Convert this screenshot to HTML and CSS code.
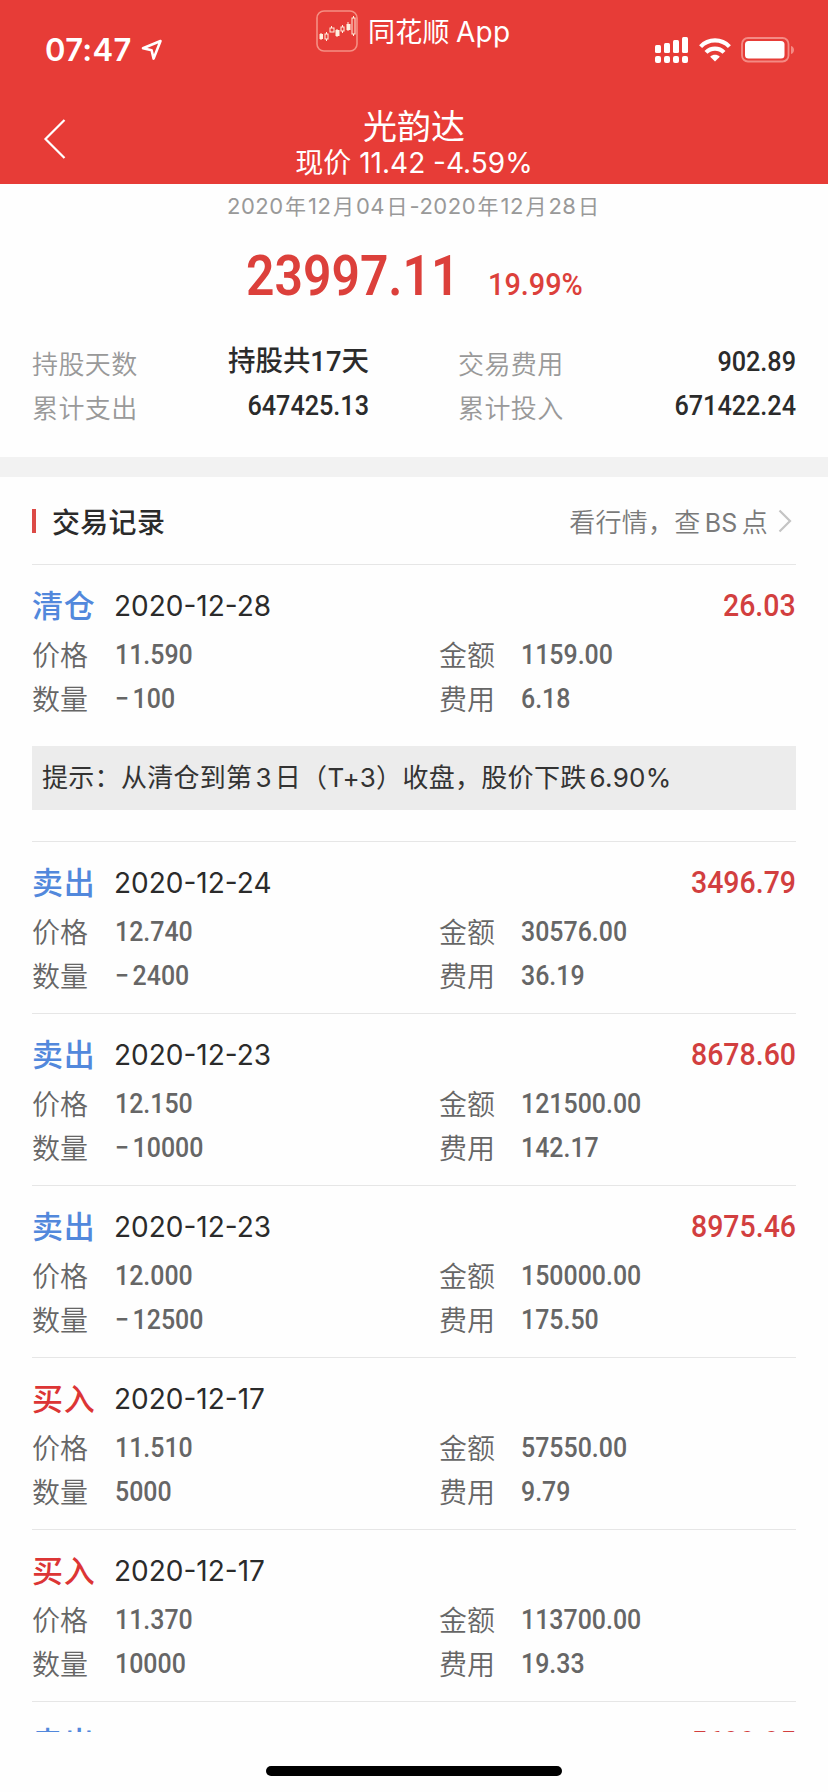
FILE: index.html
```html
<!DOCTYPE html>
<html lang="zh-CN">
<head>
    <meta charset="UTF-8">
    <meta name="viewport" content="width=device-width, initial-scale=1.0">
    <title>光韵达</title>
    <link rel="stylesheet" href="styles.css">
</head>
<body>

<div class="header">
    <div class="statusbar">
        <div class="clock">
            <span>07:47</span>
            <svg width="22" height="22" viewBox="0 0 22 22"><path d="M19.5 2 L2 9.3 L10.6 11.2 L12.6 19.6 Z" fill="none" stroke="#fff" stroke-width="2.6" stroke-linejoin="round"/></svg>
        </div>
        <div class="brand">
            <svg width="42" height="42" viewBox="0 0 42 42">
                <rect x="1" y="1" width="40" height="40" rx="7" fill="none" stroke="#f58f84" stroke-width="1.6"/>
                <g fill="none" stroke="#fff0df" stroke-width="1">
                    <path d="M5 23v7M10.5 22v2M10.5 29v2M15.500 16v2M21 19v8M26.500 15v2M26.500 21v2M32 12v9M37.500 6v2M37.500 24v2"/>
                    <rect x="9" y="24" width="3" height="5"/>
                    <rect x="14" y="18" width="4" height="4"/>
                    <rect x="25" y="17" width="3" height="4"/>
                    <rect x="36" y="8" width="3" height="16"/>
                </g>
                <path d="M3.500 24h3.500v5h-3.500zM19.500 20h4v6h-4zM30.500 14h4v6h-4z" fill="#fff0df"/>
            </svg>
            <span>同花顺<i>App</i></span>
        </div>
        <div class="signals">
            <svg width="34" height="27" viewBox="0 0 34 27" fill="#fff">
                <rect x="0" y="8" width="6" height="8" rx="1.500"/>
                <rect x="9" y="6" width="6" height="10" rx="1.500"/>
                <rect x="18" y="3" width="6" height="13" rx="1.500"/>
                <rect x="27" y="0" width="6" height="16" rx="1.500"/>
                <rect x="0" y="19" width="6" height="7" rx="2"/>
                <rect x="9" y="19" width="6" height="7" rx="2"/>
                <rect x="18" y="19" width="6" height="7" rx="2"/>
                <rect x="27" y="19" width="6" height="7" rx="2"/>
            </svg>
            <svg width="32" height="24" viewBox="0 0 32 24">
                <g fill="none" stroke="#fff" stroke-width="4.200">
                    <path d="M1.600 8.600 C9.500 0.400 22.500 0.400 30.400 8.600"/>
                    <path d="M7 14.400 C12 9.300 20 9.300 25 14.400"/>
                </g>
                <path d="M11.200 18.700 C14 16.200 18 16.200 20.800 18.700 L16 23.600 Z" fill="#fff"/>
            </svg>
            <svg width="54" height="26" viewBox="0 0 54 26">
                <rect x="1" y="1" width="46.500" height="23.500" rx="6" fill="none" stroke="#f48a84" stroke-width="1.800"/>
                <rect x="4" y="4" width="39.500" height="17.500" rx="3.500" fill="#fff"/>
                <path d="M50 9 C54 10 54 16 50 17 Z" fill="#f48a84"/>
            </svg>
        </div>
    </div>
    <div class="navbar">
        <svg class="back" width="24" height="42" viewBox="0 0 24 42"><path d="M21.500 2 L2.500 21 L21.500 40" fill="none" stroke="#fff" stroke-width="2.200"/></svg>
        <div class="stock">
            <div class="stock-name">光韵达</div>
            <div class="stock-price">现价 11.42 -4.59%</div>
        </div>
    </div>
</div>

<div class="summary">
    <div class="period">2020<b>年</b>12<b>月</b>04<b>日</b>-2020<b>年</b>12<b>月</b>28<b>日</b></div>
    <div class="profit">
        <span class="profit-value">23997.11</span>
        <span class="profit-rate">19.99%</span>
    </div>
    <div class="totals">
        <span class="label">持股天数</span><span class="value value-cn">持股共17天</span>
        <span class="label">交易费用</span><span class="value">902.89</span>
        <span class="label">累计支出</span><span class="value">647425.13</span>
        <span class="label">累计投入</span><span class="value">671422.24</span>
    </div>
</div>

<div class="records">
    <div class="records-head">
        <h2>交易记录</h2>
        <a class="more"><span>看行情，查<i>BS</i>点</span>
            <svg width="14" height="24" viewBox="0 0 14 24"><path d="M1.500 1.500 L12 12 L1.500 22.500" fill="none" stroke="#c4c4c4" stroke-width="2.200"/></svg>
        </a>
    </div>

    <div class="record">
        <div class="record-top"><span class="type sell">清仓</span><span class="date">2020-12-28</span><span class="gain">26.03</span></div>
        <div class="detail"><span>价格</span><b>11.590</b><span>金额</span><b>1159.00</b></div>
        <div class="detail"><span>数量</span><b><i>−</i>100</b><span>费用</span><b>6.18</b></div>
        <div class="tip">提示：从清仓到第<i>3</i>日（T+3）收盘，股价下跌<i>6.90%</i></div>
    </div>

    <div class="record">
        <div class="record-top"><span class="type sell">卖出</span><span class="date">2020-12-24</span><span class="gain">3496.79</span></div>
        <div class="detail"><span>价格</span><b>12.740</b><span>金额</span><b>30576.00</b></div>
        <div class="detail"><span>数量</span><b><i>−</i>2400</b><span>费用</span><b>36.19</b></div>
    </div>

    <div class="record">
        <div class="record-top"><span class="type sell">卖出</span><span class="date">2020-12-23</span><span class="gain">8678.60</span></div>
        <div class="detail"><span>价格</span><b>12.150</b><span>金额</span><b>121500.00</b></div>
        <div class="detail"><span>数量</span><b><i>−</i>10000</b><span>费用</span><b>142.17</b></div>
    </div>

    <div class="record">
        <div class="record-top"><span class="type sell">卖出</span><span class="date">2020-12-23</span><span class="gain">8975.46</span></div>
        <div class="detail"><span>价格</span><b>12.000</b><span>金额</span><b>150000.00</b></div>
        <div class="detail"><span>数量</span><b><i>−</i>12500</b><span>费用</span><b>175.50</b></div>
    </div>

    <div class="record">
        <div class="record-top"><span class="type buy">买入</span><span class="date">2020-12-17</span></div>
        <div class="detail"><span>价格</span><b>11.510</b><span>金额</span><b>57550.00</b></div>
        <div class="detail"><span>数量</span><b>5000</b><span>费用</span><b>9.79</b></div>
    </div>

    <div class="record">
        <div class="record-top"><span class="type buy">买入</span><span class="date">2020-12-17</span></div>
        <div class="detail"><span>价格</span><b>11.370</b><span>金额</span><b>113700.00</b></div>
        <div class="detail"><span>数量</span><b>10000</b><span>费用</span><b>19.33</b></div>
    </div>

    <div class="record">
        <div class="record-top"><span class="type sell">卖出</span><span class="gain">5699.95</span></div>
    </div>
</div>

<div class="home-bar"></div>

</body>
</html>
```

FILE: styles.css
```css
* {
    box-sizing: border-box;
}

body {
    margin: 0;
    width: 828px;
    height: 1792px;
    overflow: hidden;
    background-color: #fefefe;
    color: #2b2b2b;
    font-family: Inter, "Noto Sans CJK SC", sans-serif;
}

i {
    font-style: normal;
}

svg {
    display: block;
    flex: none;
}

/* header */
.header {
    height: 184px;
    background-color: #e73c37;
    color: #fff;
}

.statusbar {
    display: grid;
    grid-template-columns: 316px 1fr 173px;
    height: 98px;
}

.clock {
    display: flex;
    align-items: center;
    gap: 9px;
    padding: 1px 0 0 45px;
    font-size: 31px;
    font-weight: 600;
    letter-spacing: 0.3px;
}

.brand {
    display: flex;
    align-items: center;
    gap: 10px;
    height: 42px;
    margin-top: 10px;
    font-size: 27px;
    line-height: 38px;
    letter-spacing: 0.3px;
    white-space: nowrap;
}

.brand span {
    margin-top: 2px;
}

.brand i {
    margin-left: 6px;
    font-size: 28px;
}

.signals {
    display: flex;
    align-items: center;
    gap: 10px;
    padding: 2px 0 0 0;
}

.navbar {
    display: grid;
    grid-template-columns: 100px 1fr 100px;
    height: 86px;
}

.back {
    margin: 20px 0 0 43px;
}

.stock {
    text-align: center;
}

.stock-name {
    margin-top: 9px;
    font-size: 34px;
    line-height: 40px;
}

.stock-price {
    font-size: 28px;
    line-height: 32px;
}

/* summary */
.summary {
    height: 293px;
    border-bottom: 20px solid #f2f2f2;
}

.period {
    height: 44px;
    color: #999;
    font-size: 22px;
    line-height: 44px;
    letter-spacing: 0.5px;
    text-align: center;
}

.period b {
    margin: 0 1.5px;
    font-size: 21px;
    font-weight: 400;
}

/* numbers are squeezed to get a DIN-like look */
.profit-value,
.profit-rate,
.value,
.gain,
.detail b {
    font-family: Roboto, "Noto Sans CJK SC", sans-serif;
    font-weight: 500;
    transform: scaleX(0.9);
    transform-origin: left;
}

.profit {
    display: flex;
    align-items: baseline;
    gap: 2px;
    height: 110px;
    padding-left: 246px;
    color: #dc403b;
    line-height: 97px;
}

.profit-value {
    font-size: 56px;
    font-weight: 600;
    transform: scaleX(0.89);
}

.profit-rate {
    font-size: 31px;
    transform: scaleX(0.93);
}

.totals {
    display: grid;
    grid-template-columns: 125px 212px 215px 212px;
    padding: 2px 0 0 32px;
    line-height: 44px;
}

.label {
    height: 44px;
    padding-top: 3px;
    color: #999;
    font-size: 26px;
    font-weight: 350;
    letter-spacing: 0.4px;
    white-space: nowrap;
}

.totals .label:nth-child(4n + 3) {
    padding-left: 89px;
}

.value {
    height: 44px;
    font-size: 28px;
    text-align: right;
    transform-origin: right;
}

.value-cn {
    transform: scaleX(0.98);
}

/* records */
.records {
    height: 1255px;
    overflow: hidden;
    padding: 0 32px;
}

.records-head {
    display: flex;
    align-items: center;
    justify-content: space-between;
    height: 87px;
}

.records-head h2 {
    display: flex;
    align-items: center;
    margin: 0;
    font-size: 28px;
    font-weight: 500;
    letter-spacing: 0.3px;
}

.records-head h2::before {
    content: '';
    width: 4px;
    height: 24px;
    margin-right: 16px;
    background-color: #dc4a46;
}

.more {
    display: flex;
    align-items: center;
    gap: 10px;
    padding-right: 4px;
    color: #7a7a7a;
    font-size: 26px;
    font-weight: 350;
    letter-spacing: 0.3px;
}

.more i {
    margin: 0 4px;
    font-size: 25px;
    font-weight: 400;
}

.record {
    height: 172px;
    padding-top: 16px;
    border-top: 1px solid #e6e6e6;
}

.record:nth-child(2) {
    height: 277px;
}

.record-top {
    display: flex;
    height: 52px;
    line-height: 50px;
}

.type {
    width: 82px;
    font-size: 31px;
    font-weight: 500;
    letter-spacing: 0.8px;
}

.sell {
    color: #5288dc;
}

.buy {
    color: #dc3535;
}

.date {
    font-size: 28px;
}

.gain {
    margin-left: auto;
    color: #d23f3f;
    font-size: 32px;
    line-height: 48px;
    transform: scaleX(0.89);
    transform-origin: right;
}

.detail {
    display: grid;
    grid-template-columns: 83px 324px 82px 1fr;
    height: 44px;
    color: #666;
    font-size: 28px;
    line-height: 44px;
}

.detail span {
    padding-top: 1px;
    font-weight: 350;
}

.detail b {
    transform: scaleX(0.89);
}

.detail i {
    margin-right: 4px;
}

.tip {
    height: 64px;
    margin-top: 25px;
    padding-left: 10px;
    background-color: #ececec;
    color: #333;
    font-size: 26px;
    line-height: 64px;
    letter-spacing: 0.3px;
    white-space: nowrap;
}

.tip i {
    margin: 0 3px;
}

.home-bar {
    width: 296px;
    height: 10px;
    margin: 34px auto 0;
    border-radius: 5px;
    background-color: #000;
}
```
